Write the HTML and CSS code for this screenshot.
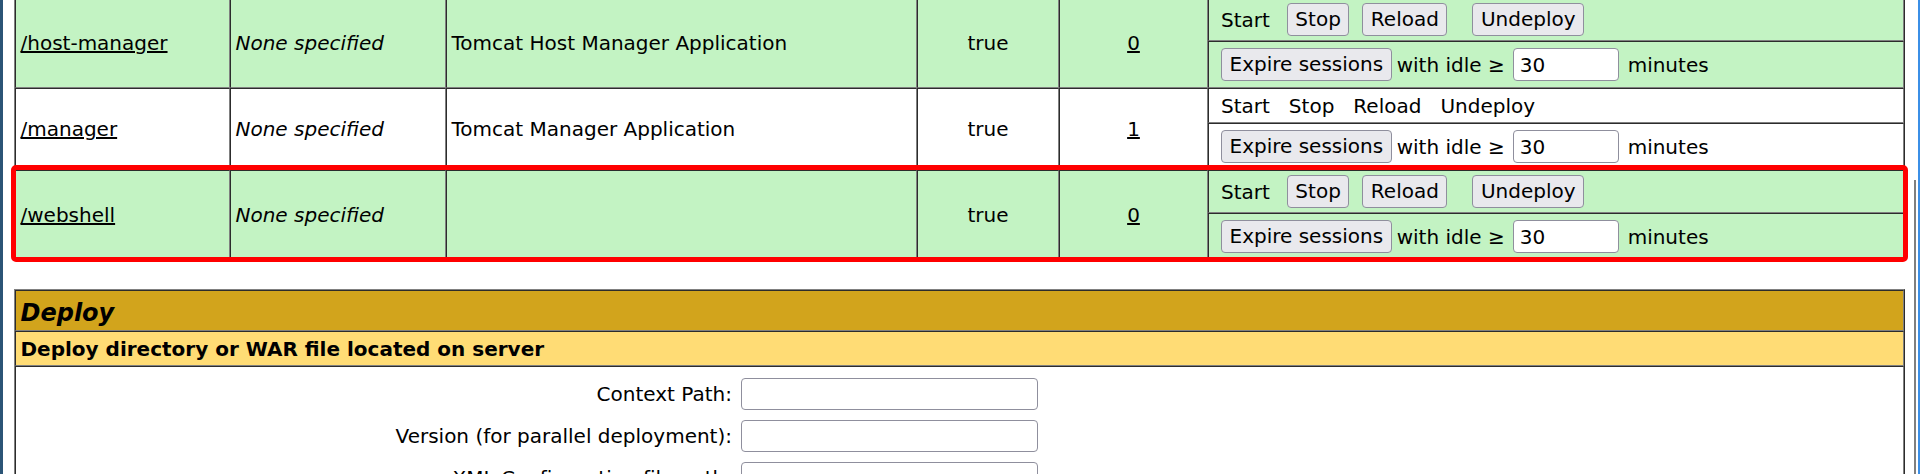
FILE: index.html
```html
<!DOCTYPE html>
<html lang="en">
<head>
<meta charset="utf-8">
<title>Tomcat Web Application Manager</title>
<link rel="stylesheet" href="styles.css">
</head>
<body>
<div class="frame">
  <table class="apps">
    <colgroup>
      <col class="c-path"><col class="c-ver"><col class="c-name"><col class="c-run"><col class="c-sess"><col class="c-cmd">
    </colgroup>
    <tbody>
      <tr class="green">
        <td rowspan="2" class="row-left"><a href="#">/host-manager</a></td>
        <td rowspan="2" class="row-left"><em>None specified</em></td>
        <td rowspan="2" class="row-left">Tomcat Host Manager Application</td>
        <td rowspan="2" class="row-center">true</td>
        <td rowspan="2" class="row-center"><a href="#">0</a></td>
        <td class="cmd"><div class="cmd-line btn-line"><span>Start</span><button class="btn b-stop">Stop</button><button class="btn b-reload">Reload</button><button class="btn b-undeploy">Undeploy</button></div></td>
      </tr>
      <tr class="green">
        <td class="cmd"><div class="cmd-line expire-line"><button class="btn">Expire sessions</button><span class="idle">with idle ≥</span><input class="idle-input" type="text" value="30"><span class="minutes">minutes</span></div></td>
      </tr>
      <tr class="white">
        <td rowspan="2" class="row-left"><a href="#">/manager</a></td>
        <td rowspan="2" class="row-left"><em>None specified</em></td>
        <td rowspan="2" class="row-left">Tomcat Manager Application</td>
        <td rowspan="2" class="row-center">true</td>
        <td rowspan="2" class="row-center"><a href="#">1</a></td>
        <td class="cmd"><div class="cmd-line text-line"><span>Start</span><span class="t-gap">Stop</span><span class="t-gap">Reload</span><span class="t-gap">Undeploy</span></div></td>
      </tr>
      <tr class="white">
        <td class="cmd"><div class="cmd-line expire-line"><button class="btn">Expire sessions</button><span class="idle">with idle ≥</span><input class="idle-input" type="text" value="30"><span class="minutes">minutes</span></div></td>
      </tr>
      <tr class="green">
        <td rowspan="2" class="row-left"><a href="#">/webshell</a></td>
        <td rowspan="2" class="row-left"><em>None specified</em></td>
        <td rowspan="2" class="row-left"></td>
        <td rowspan="2" class="row-center">true</td>
        <td rowspan="2" class="row-center"><a href="#">0</a></td>
        <td class="cmd"><div class="cmd-line btn-line"><span>Start</span><button class="btn b-stop">Stop</button><button class="btn b-reload">Reload</button><button class="btn b-undeploy">Undeploy</button></div></td>
      </tr>
      <tr class="green">
        <td class="cmd"><div class="cmd-line expire-line"><button class="btn">Expire sessions</button><span class="idle">with idle ≥</span><input class="idle-input" type="text" value="30"><span class="minutes">minutes</span></div></td>
      </tr>
    </tbody>
  </table>

  <table class="deploy">
    <tbody>
      <tr><td class="title">Deploy</td></tr>
      <tr><td class="header-left">Deploy directory or WAR file located on server</td></tr>
      <tr>
        <td class="deploy-body">
          <form class="deploy-form">
            <label class="field-label" for="deployPath">Context Path:</label>
            <div class="field"><input id="deployPath" class="text-input" type="text"></div>
            <label class="field-label" for="deployVersion">Version (for parallel deployment):</label>
            <div class="field"><input id="deployVersion" class="text-input" type="text"></div>
            <label class="field-label" for="deployConfig">XML Configuration file path:</label>
            <div class="field"><input id="deployConfig" class="text-input" type="text"></div>
            <label class="field-label" for="deployWar">WAR or Directory path:</label>
            <div class="field"><input id="deployWar" class="text-input" type="text"></div>
          </form>
        </td>
      </tr>
    </tbody>
  </table>

  <div class="highlight"></div>
  <div class="scroll-thumb"></div>
</div>
</body>
</html>
```
FILE: styles.css
```css
* {
  box-sizing: border-box;
}

html,
body {
  margin: 0;
  padding: 0;
  background: #ffffff;
}

body {
  font-family: "DejaVu Sans", sans-serif;
  font-size: 20px;
  color: #000000;
  overflow: hidden;
}

.frame {
  position: relative;
  height: 474px;
  border-left: 3px solid #2b5476;
  border-right: 2px solid #3b8fe6;
  padding-left: 11px;
  overflow: hidden;
}

table {
  border-collapse: separate;
  border-spacing: 0;
  table-layout: fixed;
  width: 1891px;
  border: 1px outset #808080;
}

td {
  border: 1px inset #808080;
  padding: 0 4.5px;
}

a {
  color: #000000;
  text-decoration: underline;
}

em {
  font-style: italic;
}

.apps {
  margin-top: -3px;
}

.c-path { width: 215px; }
.c-ver { width: 216px; }
.c-name { width: 471px; }
.c-run { width: 142px; }
.c-sess { width: 149px; }
.c-cmd { width: 696px; }

.green td {
  background: #c3f3c3;
}

.white td {
  background: #ffffff;
}

.row-left {
  text-align: left;
  vertical-align: middle;
  white-space: nowrap;
}

.row-center {
  text-align: center;
  vertical-align: middle;
}

td.cmd {
  padding: 0 0 0 12px;
}

.cmd-line {
  display: flex;
  align-items: center;
  white-space: nowrap;
}

.btn-line { height: 41px; }
.expire-line { height: 45px; }
.text-line { height: 33px; }

.btn {
  font-family: inherit;
  font-size: 20px;
  height: 33px;
  line-height: 31px;
  padding: 0 7.5px;
  margin: 0;
  background: #e9e9ed;
  color: #000000;
  border: 1px solid #8f8f9d;
  border-radius: 4px;
}

.b-stop { margin-left: 17px; }
.b-reload { margin-left: 13px; }
.b-undeploy { margin-left: 25px; }

.t-gap { margin-left: 19px; }

.idle { margin-left: 5px; }

.idle-input {
  margin-left: 8px;
  width: 106px;
  height: 33px;
  padding: 0 6px;
  font-family: inherit;
  font-size: 20px;
  color: #000000;
  background: #ffffff;
  border: 1px solid #8f8f9d;
  border-radius: 4px;
}

.minutes { margin-left: 9px; }

.deploy {
  margin-top: 28px;
}

.title {
  background: #d2a41c;
  font-size: 24px;
  font-weight: bold;
  font-style: italic;
  line-height: 31px;
  padding: 7px 4.5px 1px;
  text-align: left;
}

.header-left {
  background: #ffdc75;
  font-weight: bold;
  line-height: 25px;
  padding: 5px 4.5px 3px;
  text-align: left;
}

.deploy-body {
  background: #ffffff;
  padding: 6px 4.5px;
}

.deploy-form {
  display: grid;
  grid-template-columns: 716px auto;
  margin: 0;
}

.field-label {
  text-align: right;
  align-self: center;
  padding-right: 4.5px;
  white-space: nowrap;
}

.field {
  padding: 5px 4.5px;
}

.text-input {
  display: block;
  width: 297px;
  height: 32px;
  font-family: inherit;
  font-size: 20px;
  background: #ffffff;
  border: 1px solid #8f8f9d;
  border-radius: 4px;
}

.highlight {
  position: absolute;
  left: 8px;
  top: 165px;
  width: 1897px;
  height: 97px;
  border: 5px solid #ff0000;
  border-radius: 5px;
  pointer-events: none;
}

.scroll-thumb {
  position: absolute;
  left: 1911px;
  top: 180px;
  width: 2px;
  height: 300px;
  background: #7f7f7f;
}
```
